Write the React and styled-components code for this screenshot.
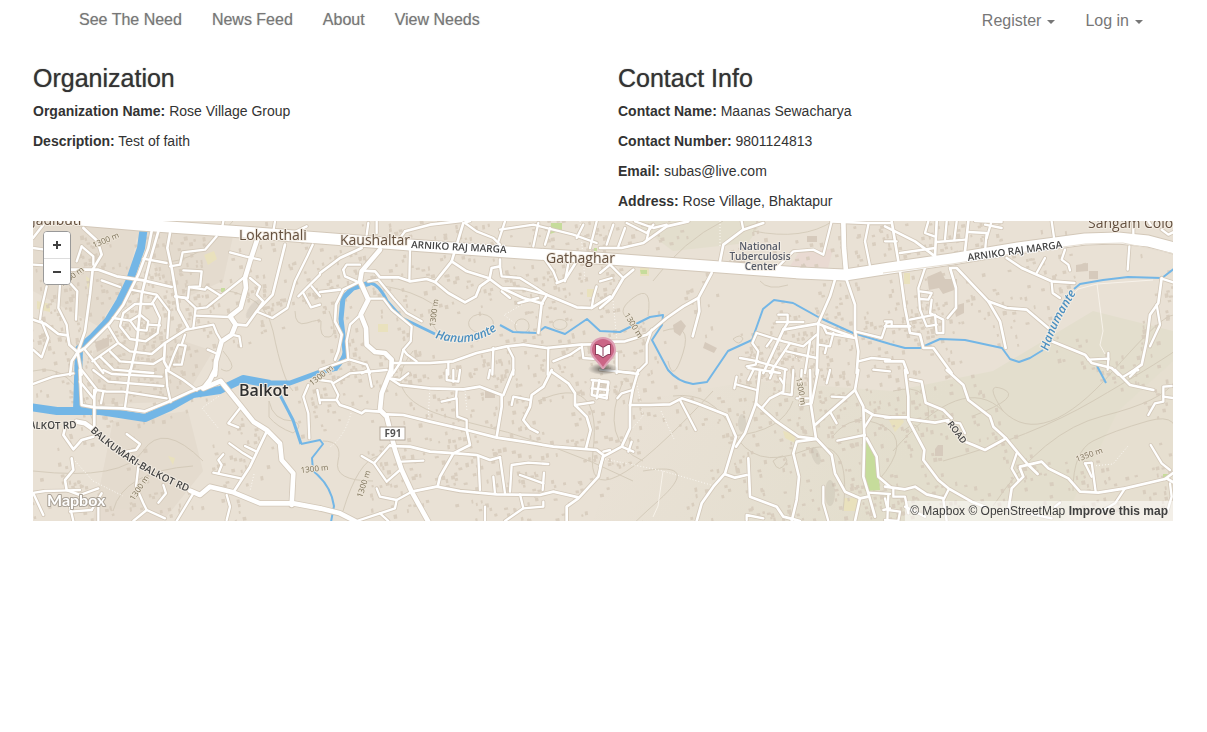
import React from 'react';
import styled, { createGlobalStyle } from 'styled-components';

const GlobalStyle = createGlobalStyle`
  *, *::before, *::after { box-sizing: border-box; }
  body {
    margin: 0;
    background: #fff;
    color: #333;
    font-family: "Liberation Sans", Arial, sans-serif;
    font-size: 14px;
    line-height: 20px;
  }
`;

const NavBar = styled.nav`
  display: flex;
  justify-content: space-between;
  align-items: flex-start;
  padding: 10px 64px 10px 79px;
  min-height: 50px;
`;

const NavList = styled.ul`
  display: flex;
  gap: 30px;
  margin: 0;
  padding: 0;
  list-style: none;
`;

const NavLink = styled.a`
  color: #777;
  font-size: 16px;
  line-height: 20px;
  text-decoration: none;
  text-shadow: 0 0 1px rgba(119, 119, 119, 0.5);
`;

const NavToggle = styled.button`
  display: flex;
  align-items: center;
  gap: 6px;
  padding: 0;
  border: 0;
  background: none;
  color: #777;
  font: inherit;
  font-size: 16px;
  line-height: 22px;
  cursor: pointer;
`;

const Caret = styled.span`
  border: 4px solid transparent;
  border-top-color: currentColor;
  border-bottom: 0;
  margin-top: 2px;
`;

const Page = styled.main`
  padding: 14px 34px 0 33px;
`;

const Columns = styled.div`
  display: grid;
  grid-template-columns: 1fr 1fr;
  gap: 30px;
`;

const Heading = styled.h3`
  margin: 0 0 9px;
  font-size: 25px;
  font-weight: 400;
  line-height: 28px;
  text-shadow: 0 0 1px rgba(51, 51, 51, 0.7);
`;

const Detail = styled.p`
  margin: 0 0 10px;
`;

const MapFrame = styled.section`
  position: relative;
  height: 300px;
  overflow: hidden;
  background: #e9e1d5;
`;

const MapDrawing = styled.svg`
  display: block;
  width: 100%;
  height: 100%;
`;

const ZoomControl = styled.div`
  position: absolute;
  top: 10px;
  left: 10px;
  display: flex;
  flex-direction: column;
  width: 28px;
  border: 1px solid #999;
  border-radius: 4px;
  background: #fff;
  overflow: hidden;
`;

const ZoomButton = styled.button`
  display: flex;
  align-items: center;
  justify-content: center;
  height: 26px;
  padding: 0;
  border: 0;
  background: #fff;
  color: #404040;
  cursor: pointer;
  & + & { border-top: 1px solid #ddd; }
`;

const Attribution = styled.div`
  position: absolute;
  right: 0;
  bottom: 0;
  padding: 0 5px;
  background: rgba(255, 255, 255, 0.5);
  font-size: 12px;
  line-height: 20px;
  white-space: nowrap;
`;

const AttributionLink = styled.a`
  color: #404040;
  text-decoration: none;
  font-weight: ${(p) => (p.$strong ? 700 : 400)};
`;

// The map is described in sections; section coordinates are three units per pixel.
const sections = [
  {
    x: -3, y: -3,
    wide: ['690,40 660,130 645,180 648,210 632,270 600,295 617,320 605,350 575,370 558,430 555,470'],
    mid: [
      '365,40 355,90 325,170 280,260 240,315 165,390 143,403 155,470',
      '385,40 362,120 335,230 320,380 300,465', '420,45 412,90 425,150 440,240 445,275 475,330 405,375 402,430 415,455',
      '9,305 45,317 85,348 113,352 118,380 143,403', '143,403 165,340 180,230 188,155 215,110 203,70 160,30',
      '105,155 205,155 260,175 340,187 425,207', '143,403 125,430 120,470', '620,320 650,322 680,280 728,230 765,80',
    ],
    minor: [
      '340,122 410,135', '420,145 450,140 458,103 525,95 560,55', '460,157 515,160 510,205 477,207 474,240 435,235',
      '477,207 525,215 530,207 572,233', '497,272 530,268 640,180', '497,293 598,297', '435,235 465,240 497,270 490,330',
      '470,335 550,320 560,345 575,370', '303,215 380,230 418,280 412,360', '315,258 370,258 390,300 383,345 347,370 300,363 270,325 280,285 315,258',
      '330,290 300,308 320,335 350,338 355,310 330,290', '250,300 300,308', '355,320 390,322', '365,258 380,235',
      '235,325 265,375 300,400 365,408 405,375', '260,378 187,430', '165,395 220,465', '210,415 250,455 370,465',
      '240,400 270,430 370,438 400,420', '415,455 430,415 445,380 467,383 455,440 432,440', '455,380 465,350',
      '215,187 270,207', '90,200 85,270 110,320 115,365', '115,190 142,220 138,305', '50,205 35,270 30,305',
      '35,310 55,360 35,418 9,395', '9,60 40,20', '9,90 45,95', '9,140 45,142', '155,85 190,115 190,140', '155,85 140,130',
      '600,103 645,115 690,125', '660,180 690,205 680,230 700,250 680,280', '683,282 727,300 772,270 795,190 832,115 848,80',
      '605,350 628,355 633,385', '533,395 556,405', '805,235 870,170', '845,205 870,235', '820,225 843,268 870,260',
      '285,10 320,22', '580,10 575,35', '735,10 730,40', '830,25 780,50',
    ],
  },
  {
    x: 287, y: -3,
    wide: ['180,95 125,160 120,190 145,245 122,290 138,330 140,380 165,402 195,405 215,425 213,470'],
    mid: [
      '125,158 165,160 180,178 235,178 270,190 320,183 345,192 385,225 435,253 468,235 480,205 508,185',
      '345,192 395,130 430,15 450,9', '120,190 70,215 48,260 45,310 65,350 55,400 45,425',
      '395,130 440,160 505,180 545,210 610,240 668,257', '680,230 770,268 815,270 870,235',
      '680,232 665,257 655,345', '0,165 60,120 125,90', '0,222 60,215', '710,195 735,185 770,130',
      '215,435 330,435 400,430 470,405 560,385 610,380 680,390 780,380 870,378',
      '255,40 330,20 425,9', '508,185 515,150 540,145 540,125',
    ],
    minor: [
      '270,90 268,190', '145,190 175,185 220,240 260,285 305,310', '70,155 80,140 120,140', '70,155 75,175 110,190',
      '540,145 545,175 600,180 640,205 680,230', '545,210 610,212 680,230', '545,220 570,240',
      '655,240 595,255', '665,110 700,160 712,190', '750,110 735,190', '815,270 820,240 830,205',
      '150,242 190,242 215,275 275,325 272,370 250,395 262,410 290,430', '122,290 90,320 80,370 85,425',
      '250,395 240,435 220,465', '385,435 385,470', '520,390 517,470', '562,385 580,420 580,470', '685,390 683,470', '785,380 790,420 850,425',
      '435,15 470,40 520,60 540,80', '555,10 535,70', '655,15 640,85', '540,35 640,20 760,50 830,75', '690,30 675,80', '790,20 770,60', '830,10 810,90',
      '85,425 0,455', '90,425 140,440 150,465', '700,430 750,410 780,390', '170,10 170,45', '145,15 140,50', '255,40 240,60',
    ],
  },
  {
    x: 567, y: -3,
    wide: ['730,10 732,90 738,160'],
    mid: [
      '335,165 295,240 250,265 200,300 140,350 75,370 0,372', '295,240 298,280 278,355',
      '705,185 690,235 655,315', '738,180 765,260 765,340 775,400 770,465', '655,315 650,470',
      '0,90 65,90 130,75 200,25 265,10', '360,130 370,80 430,35 490,15', '0,270 35,240 70,180 100,155',
      '550,335 655,317 700,335 755,355', '550,335 490,465', '695,10 800,15 870,15',
    ],
    minor: [
      '105,10 160,30 200,20', '80,15 140,45 160,20', '20,80 40,20', '55,85 75,30', '140,65 150,25', '0,165 30,140 70,180',
      '35,180 0,190', '155,335 140,380 140,435 110,465', '425,10 430,35', '535,290 563,290 563,315 550,335', '530,312 610,312',
      '470,345 550,370 610,385 650,350', '470,345 457,375 475,400 467,440 440,445', '420,420 475,430', '515,365 500,385',
      '570,375 510,465', '630,370 615,465', '670,325 680,345 765,360', '700,345 690,385 655,380', '680,385 675,405',
      '775,430 815,420 870,425', '765,340 845,360 860,315 870,312', '795,70 805,20', '795,70 810,145', '535,145 580,100 640,95 670,110 695,10',
      '445,450 540,465', '470,430 560,455', '50,405 50,465', '0,455 100,465', '820,455 870,460', '560,400 650,420',
    ],
  },
  {
    x: 852, y: -3,
    wide: [],
    mid: [
      '0,25 90,70 150,115', '45,160 60,270 75,345 105,350 115,390 145,390 200,465', '200,150 215,150 310,250 345,310 362,390',
      '195,150 213,210 213,270 188,300', '310,250 365,270 425,275 490,330', '365,120 410,150 500,190 568,195',
      '500,370 600,410 620,435 680,450 700,470', '830,180 820,255 795,290 785,370 770,440 735,465', '0,325 75,325', '0,430 55,430 68,465',
      '155,10 150,115', '240,100 250,10', '20,10 40,130',
    ],
    minor: [
      '120,150 100,210 105,275 125,325 155,320', '105,220 140,225 130,245 105,243', '140,245 135,285 175,305 175,345 155,345 150,290 75,305',
      '500,195 503,225 525,240', '480,120 455,165', '540,95 530,125 550,140 555,157', '733,85 728,155', '45,105 150,90', '155,72 240,65',
      '130,10 120,45 148,55', '185,10 180,65', '215,10 208,65', '300,20 350,30', '250,42 305,45 300,100', '305,60 320,9', '0,70 35,70',
      '500,10 508,65', '745,10 745,50', '830,35 850,50 870,40', '815,260 825,320 795,385', '830,182 870,195',
      '610,425 670,422 668,455', '670,405 670,425', '0,310 20,310 20,325', '270,9 350,12', '790,10 800,25',
    ],
  },
  {
    x: -3, y: 149,
    wide: [
      '555,0 540,30 520,55 572,33 630,105 670,155 710,180 750,220 755,270 790,310 785,405',
      '140,155 165,160 200,185', '480,362 510,375 540,350 610,367 690,400 790,400 870,415',
    ],
    mid: [
      '193,60 193,180', '150,0 155,105 195,112 280,115 345,124 415,95 480,65 520,50', '710,185 660,290 610,367',
      '105,175 100,195 130,238 155,210 190,200', '125,265 130,300 105,330 110,360 150,375',
    ],
    minor: [
      '155,0 200,58 190,85 150,35', '200,60 230,65 280,65 410,85', '190,0 235,35 400,48', '220,0 245,12 395,20', '300,0 285,112',
      '408,0 412,50 422,95', '410,0 460,30 500,60', '0,45 70,20 130,10', '220,65 213,100',
      '630,115 595,160 625,172', '598,220 640,250 665,265', '645,228 680,245', '550,308 632,325', '565,310 575,285 565,270 580,253',
      '835,45 820,80 835,130 838,205', '870,100 862,60', '290,192 330,222 318,240 290,245', '325,290 318,350 340,400 350,420 310,453',
      '350,420 405,445', '400,345 408,370 385,398', '490,370 440,453', '590,375 600,410 590,450', '0,370 45,363 95,362 150,360',
      '10,370 40,435', '150,375 205,355', '120,410 130,453', '120,425 185,420', '185,420 215,370', '205,410 205,453',
    ],
  },
  {
    x: 287, y: 149,
    wide: ['213,0 185,70 180,120 200,140 215,200 225,240 245,300 275,365 325,455', '0,415 60,430 105,453'],
    mid: [
      '0,90 50,90 60,105 90,115 125,130 135,122 180,125', '200,133 250,135 330,155 440,180 530,203 610,215 700,230 830,240 850,255',
      '210,25 240,45 330,55 430,58 480,50 545,75 545,110 530,200', '580,0 550,75', '695,0 670,50 635,75 630,110 610,150 630,175 653,187',
      '695,5 745,40 765,70 765,105 800,140 812,180 798,235', '275,365 350,350 420,363 530,373 660,375 700,365 775,382',
      '850,255 835,320 775,385 740,410 740,453', '210,228 270,230 330,245 410,250 470,255 510,270 540,262',
      '440,180 450,225 400,250 360,320 353,350',
    ],
    minor: [
      '0,30 35,35 55,75 50,90', '40,40 90,10 200,0', '125,10 145,0 155,50', '210,25 240,30 265,10', '380,0 380,30 415,35 420,0', '400,0 400,35',
      '410,60 408,85 365,95', '410,85 412,140 440,150 440,180', '575,105 580,80 630,90', '765,105 820,97', '510,0 505,25',
      '815,30 865,35 860,85 815,75 820,30', '838,30 830,85', '815,55 865,60', '125,258 162,280 200,335 240,300', '162,280 210,225',
      '245,275 310,272', '475,260 480,360', '540,262 555,370', '520,320 525,370', '570,365 575,285 625,278 685,282', '600,315 670,340',
      '672,308 668,360', '170,355 180,380 230,390 275,365', '230,390 225,415 180,430 110,453', '180,430 205,453', '600,373 610,415 555,453',
      '610,415 670,410 670,395', '495,410 495,453', '850,245 870,240',
    ],
  },
  {
    x: 567, y: 149,
    wide: [],
    mid: [
      '115,0 98,60 90,105 90,175 65,230 10,260 0,290', '90,105 150,105 210,103 245,85 290,100 380,135 408,200 375,310 340,350 305,400 290,453',
      '480,0 468,100 435,190 408,230', '468,100 530,155 595,200 650,207 695,255 705,310 735,365 780,385 805,380',
      '630,0 632,100 648,205', '650,207 590,215 580,250 597,320 590,390 575,453', '645,165 690,125 765,60 775,0',
      '765,60 790,110 793,200 790,320 805,370 825,440', '445,265 450,380 530,410 550,440 600,453', '795,120 820,135 870,142',
      '800,205 830,260 835,320 870,350', '780,385 765,453', '375,313 405,323 440,315',
    ],
    minor: [
      '55,5 115,12', '0,35 25,38 20,85', '0,75 20,75', '98,60 65,70 52,85', '240,90 287,180', '65,230 100,245', '85,245 95,215',
      '410,20 403,55', '405,42 470,60', '445,30 460,0', '520,0 510,25', '555,0 550,65 510,85 485,115', '540,25 550,40', '580,0 575,75 545,70',
      '605,0 600,90', '655,0 635,100 600,105', '690,0 680,40', '690,125 710,160', '695,80 735,82', '815,138 795,170', '712,212 795,195',
      '440,450 440,435 490,445', '670,350 670,400 685,453', '805,368 870,372', '865,375 862,453', '870,415 850,420', '590,85 625,85',
    ],
  },
  {
    x: 852, y: 149,
    wide: [],
    mid: [
      '60,0 70,80 70,150 118,240 115,270 160,330 190,355 260,395 300,410', '185,0 235,45 250,90 315,140 325,170 363,205 400,250 430,285 458,312',
      '0,142 70,142', '75,148 150,158 190,150', '75,28 110,35 122,98 175,120 200,145', '240,215 265,225 300,240 363,205',
      '405,290 470,275 490,295 550,325 585,365 640,368 720,355 840,327', '405,295 415,320 380,355 370,420', '690,0 735,45 805,60',
      '0,350 60,358 90,350 125,373 175,385', '840,327 870,305', '845,325 870,340',
    ],
    minor: [
      '395,250 380,295 400,330', '600,280 620,278 632,365', '600,280 620,320', '715,20 740,5 760,0', '735,20 750,5',
      '790,135 810,100 835,95 835,50 860,48', '835,80 870,85', '797,225 830,280 855,300', '720,355 690,400 640,430', '855,340 860,380 845,430',
      '190,360 175,390 185,453', '25,355 25,380 60,380 70,430', '0,385 8,420', '10,420 45,425 40,453 0,450', '510,410 525,398', '185,155 225,160 240,190',
      '430,430 500,445', '60,410 120,440',
    ],
  },
];

const arnikoHighway = '30,-3 47,-1 107,4 210,11 287,17 377,24 460,30 577,38 687,46 767,52 812,54 857,47 919,38 985,27 1052,18 1085,17 1115,20 1145,28';

const rivers = [
  { w: 8, d: 'M112 -2 L108 27 L97 59 L87 80 L75 100 L60 116 L46 128 L44 190' },
  { w: 8, d: 'M-3 186 L24 190 L67 190 L112 197 L137 186 L160 173 L187 169 L210 158 L237 163' },
  { w: 5, d: 'M233 162 L257 162 L287 151 L304 147' },
  { w: 5, d: 'M302 148 Q312 137 312 131 L308 98 L310 77 L320 67 L337 62' },
  { w: 3, d: 'M337 62 Q346 63 354 80 L369 97 L402 113' },
  { w: 2, d: 'M467 104 L480 111 L504 112 L512 106 L532 113 L554 98 L567 110 L587 111 L617 96 L630 94 L629 104 L619 119 L635 149 Q645 161 660 163 L674 161 L695 130 L719 119 L730 88 L741 79 L760 82 L787 97 L820 112 L857 123 L872 127 L887 127 L907 118 L932 119 L969 127 L977 138 L986 141 L997 137 L1010 129' },
  { w: 2, d: 'M1041 68 L1047 63 L1070 59 L1095 56 L1129 57 L1142 47' },
  { w: 2, d: 'M1064 145 L1073 162' },
  { w: 3, d: 'M247 174 L260 199 L268 223' },
  { w: 2, d: 'M268 223 L287 219 L290 223 L279 237 L280 250 Q298 264 301 285 L298 301' },
];

const contours = [
  'M380 130 Q340 180 430 200 T600 260', 'M150 70 Q230 60 240 110 T260 170', 'M351 65 Q380 70 400 83 Q395 100 405 112',
  'M436 105 a12 9 0 1 0 24 -5 a12 9 0 1 0 -24 5', 'M482 106 a7 7 0 1 0 14 -2 a7 7 0 1 0 -14 2', 'M520 104 a7 5 0 1 0 14 -1 a7 5 0 1 0 -14 1',
  'M600 100 Q580 92 600 77 T615 95', 'M630 110 Q660 100 650 132 T635 140', 'M700 118 q8 -6 10 0 q-4 8 -10 0', 'M727 60 Q735 70 755 64',
  'M860 230 Q930 150 970 190 T1080 150 T1142 105', 'M910 240 Q1000 215 1060 180 T1142 130', 'M1040 270 Q1040 230 1060 220 T1115 200 T1142 225',
  'M960 285 Q1010 210 1070 195 T1142 160', 'M970 190 Q950 160 970 168 T940 195', 'M0 250 Q90 260 110 230 T170 240', 'M80 290 Q90 250 160 245',
  'M290 220 Q310 220 305 240 T340 260', 'M310 290 Q325 240 345 235', 'M640 175 Q680 170 700 210 T770 230 T810 290', 'M700 215 Q750 210 760 180',
  'M740 240 q12 -10 14 0 q-8 15 -14 0', 'M800 215 Q820 190 850 205 T845 260', 'M610 250 Q670 240 625 280 T610 300', 'M860 170 Q900 160 895 200',
  'M590 160 Q565 220 610 240', 'M200 0 Q160 50 110 40', 'M505 180 Q570 150 560 230 T680 170', 'M0 150 Q40 140 60 200', 'M690 0 Q650 20 620 60', 'M870 210 q15 -12 16 0', 'M720 10 Q770 20 800 0',
  'M262 90 q0 16 12 12 t14 -2 q-2 18 8 16 t0 -26', 'M236 180 q4 20 24 20 q12 4 0 12 q-16 -6 -24 -16 Z', 'M190 130 q12 14 8 18 t-10 0',
];

const trails = [
  'M602 153 L610 195 L590 218', 'M628 190 L641 218', 'M572 238 L630 250 L678 264', 'M42 240 L60 260 L90 275', 'M484 104 L471 94 L490 83',
  'M687 0 L687 26', 'M547 0 L552 60', 'M397 166 L395 198', 'M432 170 L434 190', 'M1060 245 L1080 243 L1095 225', 'M580 80 L584 120', 'M742 125 L770 140',
  'M186 175 L169 187 L186 208', 'M318 192 Q312 215 297 226', 'M221 253 L217 270',
];

const paths = ['M1064 63 L1070 110 L1067 124 L1072 133', 'M1014 127 L1030 85 L1045 68 L1064 63 L1120 59', 'M630 250 L625 285 L620 296'];

const parcels = [
  'M0 0 H107 L95 60 L65 105 L0 70 Z', 'M100 10 L200 15 L190 60 L145 80 L125 50 Z', 'M60 130 L120 110 L180 130 L150 180 L60 184 Z',
  'M80 200 L155 190 L170 250 L130 300 H60 Z',
];

// Small deterministic generator, so that the blocks of houses stay in place between renders.
function housesAlong({ mid, minor }, seed) {
  let state = seed * 7919 + 17;
  const next = () => {
    state = (state * 1103515245 + 12345) % 2147483648;
    return state / 2147483648;
  };
  let d = '';
  [...mid, ...minor].forEach((line) => {
    const pts = line.split(' ').map((p) => p.split(',').map(Number));
    for (let i = 1; i < pts.length; i += 1) {
      const [ax, ay] = pts[i - 1];
      const [bx, by] = pts[i];
      const len = Math.hypot(bx - ax, by - ay) || 1;
      for (let at = 8; at < len; at += 14) {
        const side = next() > 0.5 ? 1 : -1;
        const off = side * (14 + next() * 32);
        const x = ax + ((bx - ax) * at) / len - ((by - ay) / len) * off;
        const y = ay + ((by - ay) * at) / len + ((bx - ax) / len) * off;
        const w = 5 + next() * 7;
        const h = 6 + next() * 7;
        if (next() > 0.2) d += `M${x.toFixed(1)} ${y.toFixed(1)}l${w.toFixed(1)} -2l2 ${h.toFixed(1)}l-${w.toFixed(1)} 2z`;
      }
    }
  });
  return d;
}

const houses = sections.map((s, i) => housesAlong(s, i + 1));

const bigHouses = 'M894 56 l14 -6 l4 8 l12 0 v10 l-14 5 l-4 -6 l-10 2 Z M1043 44 l12 -2 v8 l-12 1 Z M1056 50 h9 v8 h-9 Z M640 104 l8 -5 l5 6 l-6 10 l-6 -4 Z M672 121 l12 6 l-3 5 l-11 -5 Z M62 121 l14 -5 v9 l-12 6 Z M763 50 l8 -8 l4 6 l-6 8 Z M774 15 h10 v6 h-10 Z M768 43 l6 4 l-5 5 Z M700 37 h12 v6 h-12 Z M452 170 h10 v7 h-10 Z M921 85 l10 -3 v10 l-8 4 Z M905 224 h5 v11 h-8 v-7 Z';

const roadStyles = { wide: [19, 14], mid: [13, 8], minor: [12, 7] };

function RoadLayer({ casing }) {
  return (
    <g fill="none" stroke={casing ? '#d3c8b9' : '#fff'} strokeLinejoin="round" strokeLinecap="round">
      {sections.map((s) => (
        <g key={`${s.x},${s.y}`} transform={`translate(${s.x} ${s.y}) scale(0.33333)`}>
          {['minor', 'mid', 'wide'].map((kind) => s[kind].map((points) => (
            <polyline key={points} points={points} strokeWidth={roadStyles[kind][casing ? 0 : 1]} />
          )))}
        </g>
      ))}
      <polyline points={arnikoHighway} strokeWidth={casing ? 13 : 11} />
    </g>
  );
}

const MapLabel = styled.text`
  font-family: "Open Sans", "Noto Sans", sans-serif;
  font-size: ${(p) => p.$size}px;
  font-weight: ${(p) => p.$weight || 400};
  font-style: ${(p) => (p.$italic ? 'italic' : 'normal')};
  fill: ${(p) => p.$color || '#64503f'};
  stroke: ${(p) => p.$halo || '#f3ede4'};
  stroke-width: ${(p) => (p.$halo === 'none' ? 0 : 2)}px;
  stroke-linejoin: round;
  paint-order: stroke;
`;

const heights = [
  ['1300 m', 61, 27, -23], ['1300 m', 29, 66, -36], ['1300 m', 402, 106, -83], ['1300 m', 591, 94, 58], ['1300 m', 763, 157, 80],
  ['1300 m', 279, 165, -38], ['1300 m', 268, 252, -6], ['1300 m', 101, 280, -57], ['1300 m', 329, 277, -72], ['1350 m', 1044, 241, -20],
];

function CityMap() {
  return (
    <MapDrawing viewBox="0 0 1140 300" preserveAspectRatio="xMidYMid slice" role="img" aria-label="Map of Rose Village, Bhaktapur">
      <defs>
        <linearGradient id="hills" gradientUnits="userSpaceOnUse" x1="640" y1="130" x2="860" y2="260">
          <stop offset="0" stopColor="#e3decf" stopOpacity="0" />
          <stop offset="1" stopColor="#e3decd" />
        </linearGradient>
        <radialGradient id="shade">
          <stop offset="0" stopColor="#000" stopOpacity="0.55" />
          <stop offset="1" stopColor="#000" stopOpacity="0" />
        </radialGradient>
        <path id="river-west" d="M402 117 Q440 129 468 106" />
        <path id="river-east" d="M1015 130 Q1023 102 1047 66" />
        <path id="balkumari" d="M57 210 Q95 247 162 274" />
        <path id="balkot-road" d="M-4 207 Q20 210 52 206" />
      </defs>
      <rect width="1140" height="300" fill="#e9e1d5" />
      <path d="M560 300 L600 180 L720 160 L860 170 L960 150 L1060 90 L1140 110 V300 Z" fill="url(#hills)" />
      <path d="M600 0 H730 L715 22 L640 30 Z" fill="#e3decd" />
      <g fill="#e3dacd" opacity="0.8">{parcels.map((d) => <path key={d} d={d} />)}</g>
      <path d="M1085 190 L1140 140 V300 H1030 Z" fill="#e8dfd2" opacity="0.6" />
      <path d="M767 30 L800 28 L795 47 L755 48 Z" fill="#e9dad2" />
      <g fill="#e9e1bd">
        <path d="M607 47 h9 v8 h-9 Z M750 210 l12 3 v9 l-10 -5 Z M811 277 h13 v13 h-13 Z M856 199 l11 -6 l4 8 l-9 10 Z M171 34 l10 -4 l3 8 l-9 6 Z M345 103 h10 v8 h-10 Z M871 52 h6 v11 h-6 Z M135 235 l7 2 l-2 7 Z M554 68 h7 v8 h-7 Z M4 80 l13 3 v8 l-13 -3 Z M53 55 l5 4 l-3 10 Z" />
      </g>
      <g fill="none" stroke="#cfc5b3" strokeWidth="1" opacity="0.75">{contours.map((d) => <path key={d} d={d} />)}</g>
      <g fill="#d6cabb" opacity="0.85">
        {sections.map((s, i) => (
          <path key={`${s.x},${s.y}`} d={houses[i]} transform={`translate(${s.x} ${s.y}) scale(0.33333)`} />
        ))}
      </g>
      <path d={bigHouses} fill="#d6cabc" />
      <path fill="#c6dc9b" d="M518 2 h11 v7 l-12 4 Z M832 220 L839 225 L845 249 L847 269 L832 270 L829 254 Z M607 49 h7 v4 h-6 Z M188 67 h4 v4 h-4 Z M561 27 h3 v3 h-3 Z M1130 253 h6 v5 h-6 Z" />
      <g fill="#958a80" opacity="0.16">
        <ellipse cx="797" cy="272" rx="5" ry="13" />
        <ellipse cx="783" cy="235" rx="4" ry="9" transform="rotate(-20 783 235)" />
        <ellipse cx="220" cy="88" rx="4" ry="11" transform="rotate(35 220 88)" />
        <ellipse cx="709" cy="202" rx="4" ry="9" />
      </g>
      <g fill="none" stroke="#f7f2ea" strokeWidth="1">{paths.map((d) => <path key={d} d={d} />)}</g>
      <g fill="none" stroke="#fbf8f3" strokeWidth="1" strokeDasharray="1 2">{trails.map((d) => <path key={d} d={d} />)}</g>
      <g fill="none" stroke="#73b6e6" strokeLinejoin="round">
        {rivers.map((r) => <path key={r.d} d={r.d} strokeWidth={r.w} />)}
      </g>
      <RoadLayer casing />
      <RoadLayer />
      <path d="M850 52 L919 43 L985 32 L1052 23 L1090 22 L1142 33" fill="none" stroke="#e6ded2" strokeWidth="1" />

      {heights.map(([label, x, y, turn]) => (
        <MapLabel key={`${x},${y}`} $size={8} $color="#7d7259" $halo="#ebe3d6" transform={`translate(${x} ${y}) rotate(${turn})`}>{label}</MapLabel>
      ))}
      <MapLabel $size={14} x="-1" y="4">Jadibuti</MapLabel>
      <MapLabel $size={14} x="206" y="19">Lokanthali</MapLabel>
      <MapLabel $size={14} x="307" y="24">Kaushaltar</MapLabel>
      <MapLabel $size={14} x="513" y="42">Gathaghar</MapLabel>
      <MapLabel $size={14} x="1055" y="7">Sangam Colo</MapLabel>
      <MapLabel $size={16} $weight={600} $color="#2f2f2f" x="206" y="175">Balkot</MapLabel>
      <MapLabel $size={10} $weight={600} $color="#444" $halo="#fff" transform="translate(378 27) rotate(3)">ARNIKO RAJ MARGA</MapLabel>
      <MapLabel $size={10} $weight={600} $color="#444" $halo="#fff" transform="translate(935 40) rotate(-8)">ARNIKO RAJ MARGA</MapLabel>
      <MapLabel $size={10} $weight={600} $color="#444"><textPath href="#balkumari">BALKUMARI-BALKOT RD</textPath></MapLabel>
      <MapLabel $size={10} $weight={600} $color="#444"><textPath href="#balkot-road">ALKOT RD</textPath></MapLabel>
      <MapLabel $size={9} $weight={600} $color="#444" transform="translate(914 203) rotate(53)">ROAD</MapLabel>
      <MapLabel $size={10} $weight={600} $color="#565b68" x="727" y="29" textAnchor="middle">National</MapLabel>
      <MapLabel $size={10} $weight={600} $color="#565b68" x="727" y="39" textAnchor="middle">Tuberculosis</MapLabel>
      <MapLabel $size={10} $weight={600} $color="#565b68" x="728" y="49" textAnchor="middle">Center</MapLabel>
      <MapLabel $size={12} $weight={600} $italic $color="#4a8fc0"><textPath href="#river-west">Hanumante</textPath></MapLabel>
      <MapLabel $size={12} $weight={600} $italic $color="#4a8fc0"><textPath href="#river-east">Hanumante</textPath></MapLabel>
      <rect x="347" y="206" width="25" height="13" fill="#fff" stroke="#b5aa9c" strokeWidth="1" />
      <MapLabel $size={10} $weight={700} $color="#555" $halo="none" x="360" y="216" textAnchor="middle">F91</MapLabel>

      <ellipse cx="570" cy="148" rx="15" ry="6" fill="url(#shade)" />
      <path d="M570 116 C577 116 583 121 583 129 C583 136 576 140 571 148 H569 C564 140 557 136 557 129 C557 121 563 116 570 116 Z" fill="#dda0b5" />
      <path d="M570 118 C576 118 581 123 581 129 C581 135 575 138 570 146 C565 138 559 135 559 129 C559 123 564 118 570 118 Z" fill="#cb6686" />
      <path d="M563 124 L565 124 L570 127 L575 124 L577 124 V133 L575 133 L570 136 L565 133 L563 133 Z" fill="#fff" stroke="#8d3f5b" strokeWidth="2" paintOrder="stroke" />
      <path d="M570 127 V135" stroke="#8d3f5b" strokeWidth="1" />
      <text x="14" y="285" fontFamily="Lato, sans-serif" fontSize="16" fontWeight="700" fill="#fff" stroke="#aaa297" strokeWidth="2" strokeLinejoin="round" paintOrder="stroke">Mapbox</text>
    </MapDrawing>
  );
}

const links = ['See The Need', 'News Feed', 'About', 'View Needs'];

const organization = [
  ['Organization Name:', 'Rose Village Group'],
  ['Description:', 'Test of faith'],
];

const contact = [
  ['Contact Name:', 'Maanas Sewacharya'],
  ['Contact Number:', '9801124813'],
  ['Email:', 'subas@live.com'],
  ['Address:', 'Rose Village, Bhaktapur'],
];

function InfoColumn({ title, rows }) {
  return (
    <section>
      <Heading>{title}</Heading>
      {rows.map(([name, value]) => (
        <Detail key={name}><strong>{name}</strong> {value}</Detail>
      ))}
    </section>
  );
}

export default function App() {
  return (
    <>
      <GlobalStyle />
      <NavBar>
        <NavList>
          {links.map((label) => <li key={label}><NavLink href="#">{label}</NavLink></li>)}
        </NavList>
        <NavList>
          {['Register', 'Log in'].map((label) => (
            <li key={label}><NavToggle type="button">{label}<Caret /></NavToggle></li>
          ))}
        </NavList>
      </NavBar>
      <Page>
        <Columns>
          <InfoColumn title="Organization" rows={organization} />
          <InfoColumn title="Contact Info" rows={contact} />
        </Columns>
        <MapFrame>
          <CityMap />
          <ZoomControl>
            <ZoomButton type="button" aria-label="Zoom in">
              <svg width="8" height="8" viewBox="0 0 8 8"><path d="M3 0h2v3h3v2H5v3H3V5H0V3h3z" fill="currentColor" /></svg>
            </ZoomButton>
            <ZoomButton type="button" aria-label="Zoom out">
              <svg width="8" height="8" viewBox="0 0 8 8"><path d="M0 3h8v2H0z" fill="currentColor" /></svg>
            </ZoomButton>
          </ZoomControl>
          <Attribution>
            <AttributionLink href="#">© Mapbox</AttributionLink>{' '}
            <AttributionLink href="#">© OpenStreetMap</AttributionLink>{' '}
            <AttributionLink href="#" $strong>Improve this map</AttributionLink>
          </Attribution>
        </MapFrame>
      </Page>
    </>
  );
}
